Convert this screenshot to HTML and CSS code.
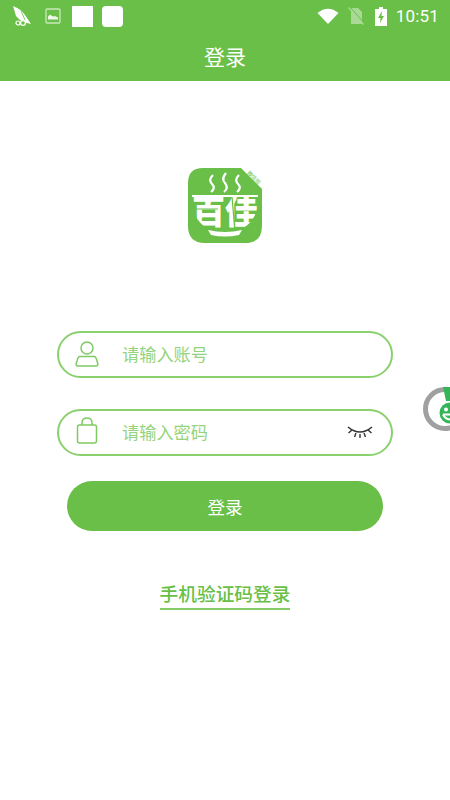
FILE: index.html
```html
<!DOCTYPE html>
<html>
<head>
    <title>登录</title>
    <link rel="stylesheet" href="styles.css">
</head>
<body>
    <div class="page">
        <div class="status-bar">
            <div class="status-left">
                <svg class="st-app" width="20" height="20" viewBox="0 0 20 20">
                    <path d="M0 0 Q8 3 12 9 L18 18 L10 16 L7 14 L3 10 Z" fill="#fff"/>
                    <path d="M8 5 L12 14" stroke="#69bf47" stroke-width="0.800"/>
                    <circle cx="5" cy="17" r="2" fill="#69bf47" stroke="#fff" stroke-width="1.200"/>
                    <circle cx="10" cy="17" r="2.400" fill="#69bf47" stroke="#fff" stroke-width="1.200"/>
                </svg>
                <svg class="st-img" width="16" height="16" viewBox="0 0 16 16">
                    <rect x="1" y="1" width="14" height="14" rx="1" fill="none" stroke="#c9e8bc" stroke-width="1.300"/>
                    <path d="M3 11.500 V8.500 L5 6.500 L7 8 L9 8.500 L10 8 L13 9.500 V11.500 Z" fill="#eef8e9"/>
                </svg>
                <span class="st-square"></span>
                <span class="st-square st-round"></span>
            </div>
            <div class="status-right">
                <svg class="st-wifi" width="22" height="16" viewBox="0 0 22 16">
                    <path d="M0.500 5 Q11 -3.500 21.500 5 L11 16 Z" fill="#fff"/>
                </svg>
                <svg class="st-sim" width="16" height="18" viewBox="0 0 16 18">
                    <path d="M3 1 H10 L14 5 V17 H3 Z" fill="#a9d995"/>
                    <path d="M0.500 0.500 L15.500 17.500" stroke="#a9d995" stroke-width="1.300"/>
                    <path d="M1.500 -0.500 L16.500 16.500" stroke="#69bf47" stroke-width="1"/>
                </svg>
                <svg class="st-batt" width="12" height="19" viewBox="0 0 12 19">
                    <path d="M4 0 H8 V2 H12 V19 H0 V2 H4 Z" fill="#fff"/>
                    <path d="M7 4 L3 11 H5.500 L5 16 L9 9 H6.500 Z" fill="#69bf47"/>
                </svg>
                <span class="st-time">10:51</span>
            </div>
        </div>

        <div class="header">登录</div>

        <div class="logo">
            <svg width="74" height="75" viewBox="0 0 74 75">
                <defs>
                    <clipPath id="bowl">
                        <path d="M3 29 H71 C71 46 62 58 50 63 H24 C12 58 3 46 3 29 Z"/>
                    </clipPath>
                </defs>
                <path d="M15 0 H53 L74 21 V58 Q74 75 57 75 H17 Q0 75 0 58 V15 Q0 0 15 0 Z" fill="#69bf47"/>
                <text class="logo-tag" x="64.500" y="11" transform="rotate(45 64.500 11)" text-anchor="middle">微信版</text>
                <path d="M25 7 Q20 12 24 16 Q28 20 23 24 M38 5 Q33 11 37 15 Q41 20 36 24 M51 7 Q46 12 50 16 Q54 20 49 24" fill="none" stroke="#fff" stroke-width="2.200"/>
                <path d="M4 27 H70 V29 H4 Z" fill="#fff"/>
                <g clip-path="url(#bowl)">
                    <text class="logo-name" x="37" y="56" text-anchor="middle">百佳</text>
                    <path d="M44 29 L47 64 M8 41 H30" stroke="#69bf47" stroke-width="1.200"/>
                </g>
                <path d="M20 62 Q37 66 54 62 L51 67 Q37 70 23 67 Z" fill="#fff"/>
            </svg>
        </div>

        <form class="form">
            <div class="field">
                <svg class="field-icon icon-user" width="24" height="26" viewBox="0 0 24 26">
                    <circle cx="12" cy="7" r="6" fill="none" stroke="#7fca62" stroke-width="1.500"/>
                    <path d="M5 15.500 H19 Q21 15.500 22 20 L23 23 Q23 25 21 25 H3 Q1 25 1 23 L2 20 Q3 15.500 5 15.500 Z" fill="none" stroke="#7fca62" stroke-width="1.500"/>
                </svg>
                <span class="placeholder">请输入账号</span>
            </div>
            <div class="field field-pass">
                <svg class="field-icon icon-lock" width="24" height="27" viewBox="0 0 24 27">
                    <path d="M7 8 V6 Q7 1 12 1 Q17 1 17 6 V8" fill="none" stroke="#7fca62" stroke-width="1.500"/>
                    <rect x="2.500" y="8" width="19" height="18" rx="2" fill="none" stroke="#7fca62" stroke-width="1.500"/>
                </svg>
                <span class="placeholder">请输入密码</span>
                <svg class="eye" width="26" height="15" viewBox="0 0 26 15">
                    <path d="M1 2 Q13 12 25 2" fill="none" stroke="#333" stroke-width="1.600"/>
                    <path d="M5 5 L1.500 8 M9 8 L7.500 12 M13 9 V13 M17 8 L18.500 12 M21 5 L24.500 8" fill="none" stroke="#333" stroke-width="1.400"/>
                </svg>
            </div>
            <button type="button" class="submit">登录</button>
        </form>

        <a class="sms-link">手机验证码登录</a>

        <svg class="float-btn" width="27" height="46" viewBox="0 0 27 46">
            <circle cx="22" cy="23" r="19.500" fill="#fff" stroke="#a0a0a0" stroke-width="5"/>
            <path d="M20 1 H27 V15 H23 Z" fill="#35b557"/>
            <circle cx="27" cy="27" r="10.500" fill="#35b557"/>
            <circle cx="23" cy="23.500" r="2" fill="#fff"/>
            <path d="M20 28.500 H27 M20 28.500 Q22 33 27 33.500" fill="none" stroke="#fff" stroke-width="2"/>
        </svg>
    </div>
</body>
</html>
```

FILE: styles.css
```css
body {
    margin: 0;
    padding: 0;
    background-color: #fff;
    font-family: "Noto Sans CJK SC", "Roboto", sans-serif;
}

.page {
    position: relative;
    width: 450px;
    height: 800px;
    overflow: hidden;
    display: flex;
    flex-direction: column;
    align-items: center;
}

.status-bar {
    width: 100%;
    height: 33px;
    box-sizing: border-box;
    background-color: #69bf47;
    display: flex;
    justify-content: space-between;
    align-items: center;
    padding: 0 11px 1px 13px;
}

.status-left,
.status-right {
    display: flex;
    align-items: center;
}

.st-img {
    margin-left: 12px;
}

.st-square {
    width: 21px;
    height: 21px;
    margin-left: 11px;
    background-color: #fff;
}

.st-round {
    border-radius: 4px;
    margin-left: 9px;
}

.st-sim {
    margin-left: 9px;
}

.st-batt {
    margin-left: 11px;
}

.st-time {
    margin-left: 9px;
    color: #fff;
    font-family: "Roboto", sans-serif;
    font-size: 17px;
    letter-spacing: 0.200px;
}

.header {
    width: 100%;
    height: 48px;
    background-color: #69bf47;
    color: #fff;
    font-size: 21px;
    line-height: 46px;
    text-align: center;
}

.logo {
    height: 75px;
    margin-top: 87px;
}

.logo svg {
    display: block;
}

.logo-tag {
    font-size: 5.500px;
    fill: #69bf47;
}

.logo-name {
    font-size: 33px;
    font-weight: 900;
    fill: #fff;
}

.form {
    margin-top: 88px;
    display: flex;
    flex-direction: column;
    align-items: center;
}

.field {
    width: 336px;
    height: 47px;
    box-sizing: border-box;
    border: 2px solid #8bd06f;
    border-radius: 24px;
    margin-bottom: 31px;
    padding-left: 16px;
    display: flex;
    align-items: center;
}

.field-pass {
    margin-bottom: 25px;
}

.field-icon {
    flex-shrink: 0;
}

.icon-user {
    margin-bottom: 2px;
}

.icon-lock {
    margin-bottom: 4px;
}

.placeholder {
    margin-left: 23px;
    margin-bottom: 2px;
    color: #95d47c;
    font-size: 17.200px;
}

.eye {
    margin-left: auto;
    margin-right: 18px;
}

.submit {
    width: 316px;
    height: 50px;
    border: none;
    border-radius: 25px;
    background-color: #69bf47;
    color: #fff;
    font-family: inherit;
    font-size: 17.500px;
    padding: 0;
}

.sms-link {
    margin-top: 48px;
    padding-bottom: 2px;
    border-bottom: 2px solid #85cc69;
    color: #69bf47;
    font-size: 18.700px;
    font-weight: 500;
    line-height: 27px;
}

.float-btn {
    position: absolute;
    right: 0;
    top: 386px;
}
```
